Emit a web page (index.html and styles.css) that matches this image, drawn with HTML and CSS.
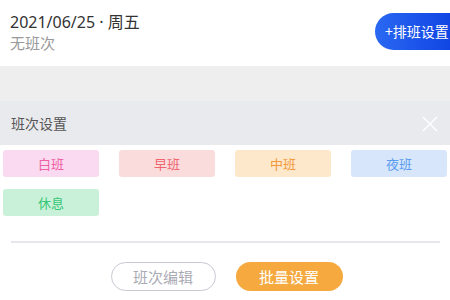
FILE: index.html
```html
<!DOCTYPE html>
<html lang="zh-CN">
<head>
  <meta charset="UTF-8" />
  <meta name="viewport" content="width=device-width, initial-scale=1.0" />
  <title>班次设置</title>
  <link rel="stylesheet" href="styles.css">
</head>
<body>
  <div class="day-head">
    <div class="day-info">
      <div class="day-date">2021/06/25 · 周五</div>
      <div class="day-shift">无班次</div>
    </div>
    <button class="btn-schedule">+排班设置</button>
  </div>

  <div class="gap-band"></div>

  <div class="panel-head">
    <span class="panel-title">班次设置</span>
    <svg class="panel-close" width="16" height="16" viewBox="0 0 16 16">
      <path d="M1 1 L15 15 M15 1 L1 15" stroke="#ffffff" stroke-width="1.3" fill="none" />
    </svg>
  </div>

  <div class="shift-grid">
    <div class="shift shift-white">白班</div>
    <div class="shift shift-early">早班</div>
    <div class="shift shift-mid">中班</div>
    <div class="shift shift-night">夜班</div>
    <div class="shift shift-rest">休息</div>
  </div>

  <div class="divider"></div>

  <div class="actions">
    <button class="btn-outline">班次编辑</button>
    <button class="btn-fill">批量设置</button>
  </div>
</body>
</html>
```

FILE: styles.css
```css
body { margin: 0; width: 450px; overflow: hidden; background: #fff; font-family: "Noto Sans CJK SC", "Noto Sans", sans-serif; }
button { font-family: inherit; border: none; cursor: pointer; padding: 0; }

.day-head { height: 66px; display: flex; justify-content: space-between; align-items: center; padding-left: 10px; box-sizing: border-box; margin-right: -16px; }
.day-info { padding-bottom: 2px; }
.day-date { font-size: 16px; line-height: 20px; color: #333; font-family: "Noto Sans", "Noto Sans CJK SC", sans-serif; }
.day-shift { font-size: 15px; line-height: 20px; margin-top: 1px; color: #999; }
.btn-schedule { width: 91px; height: 37px; margin-top: -4px; border-radius: 19px 0 0 19px; background: linear-gradient(90deg, #2a68f2, #0b3ee0); color: #fff; font-size: 14px; text-align: left; padding-left: 10px; }

.gap-band { height: 35px; background: #eeeeee; }

.panel-head { height: 44px; background: #e9eaee; display: flex; align-items: center; justify-content: space-between; padding: 0 12px 0 11px; }
.panel-title { font-size: 14px; color: #555; }
.panel-close { margin-top: 1px; }

.shift-grid { display: grid; grid-template-columns: repeat(4, 96px); column-gap: 20px; row-gap: 12px; padding: 5px 0 0 3px; }
.shift { height: 27px; line-height: 27px; border-radius: 3px; text-align: center; font-size: 13px; }
.shift-white { background: #fadaf0; color: #ef5fa4; }
.shift-early { background: #fadcdc; color: #f0646e; }
.shift-mid { background: #fde8cb; color: #f39a3c; }
.shift-night { background: #d7e6fa; color: #5b9cf0; }
.shift-rest { background: #c9f1da; color: #35c774; }

.divider { height: 2px; background: #e6e6ec; margin: 25px 10px 0 11px; }

.actions { display: flex; justify-content: center; gap: 20px; margin-top: 19px; padding-left: 3px; }
.btn-outline { width: 105px; height: 29px; border: 1.5px solid #c8c8d2; border-radius: 15px; background: #fff; color: #aaaab4; font-size: 15px; box-sizing: border-box; }
.btn-fill { width: 107px; height: 29px; border-radius: 15px; background: #f5a93e; color: #fff; font-size: 15px; }
```
